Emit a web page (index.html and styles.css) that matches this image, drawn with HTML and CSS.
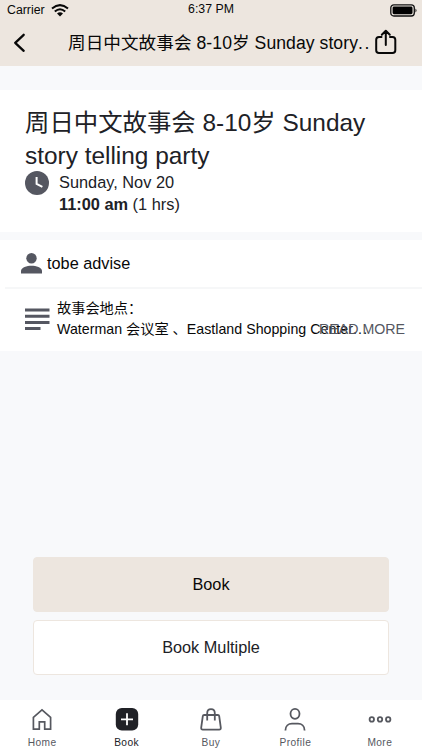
FILE: index.html
```html
<!DOCTYPE html>
<html lang="en">
<head>
<meta charset="utf-8">
<title>Class details</title>
<link rel="stylesheet" href="styles.css">
</head>
<body>
<div class="app">
  <header class="header">
    <div class="status">
      <div class="carrier"><span>Carrier</span>
        <svg width="18" height="13" viewBox="0 0 18 13" fill="none" stroke="#080808" stroke-width="2"><path d="M1 4.5Q9-2.3 17 4.5M3.8 7.5Q9 3 14.2 7.5"/><path d="M6 9.4Q9 7.2 12 9.4L9 12.5Z" fill="#080808" stroke="none"/></svg>
      </div>
      <span class="time">6:37 PM</span>
      <svg class="battery" width="28" height="13" viewBox="0 0 28 13"><rect x=".8" y=".8" width="23.5" height="11.2" rx="3" fill="none" stroke="#111" stroke-width="1.3"/><rect x="2.6" y="2.6" width="19.9" height="7.6" rx="1.4"/><path d="M25.5 4.4Q27.5 6.4 25.5 8.4Z"/></svg>
    </div>
    <div class="navbar">
      <svg class="back" width="14" height="20" viewBox="0 0 14 20" fill="none" stroke="#080808" stroke-width="2.3" stroke-linecap="round" stroke-linejoin="round"><path d="M10.7 1.8L2.2 9.8L10.7 17.8"/></svg>
      <h1 class="nav-title">周日中文故事会 8-10岁 Sunday story<span class="dots">..</span></h1>
      <svg class="share" width="22" height="26" viewBox="0 0 22 26" fill="none" stroke="#080808" stroke-width="2" stroke-linecap="round" stroke-linejoin="round"><path d="M6.5 8H4Q1.2 8 1.2 10.8V21.2Q1.2 24 4 24H17.5Q20.3 24 20.3 21.2V10.8Q20.3 8 17.5 8H15M10.8 16V2M6.8 5.8L10.8 1.8L14.8 5.8"/></svg>
    </div>
  </header>

  <main class="content">
    <section class="summary">
      <h2 class="title">周日中文故事会 8-10岁 Sunday<br>story telling party</h2>
      <div class="when">
        <svg width="24" height="24" viewBox="0 0 24 24"><circle cx="12" cy="12" r="12" fill="#555761"/><path d="M11.6 6V13L17.4 15.9" fill="none" stroke="#fff" stroke-width="2"/></svg>
        <div><p class="date">Sunday, Nov 20</p><p class="hours"><b>11:00 am</b> (1 hrs)</p></div>
      </div>
    </section>
    <section class="details">
      <div class="teacher">
        <svg width="21" height="21" viewBox="0 0 21 21" fill="#555761"><circle cx="10.5" cy="5.3" r="5.2"/><path d="M0 20.5V18C0 14.5 6 12.7 10.5 12.7S21 14.5 21 18V20.5Z"/></svg>
        <span>tobe advise</span>
      </div>
      <div class="notes">
        <svg width="25" height="23" viewBox="0 0 25 23" fill="#555761"><path d="M0 .5H24.5V3.5H0ZM0 6.7H24.5V9.7H0ZM0 12.9H24.5V15.9H0ZM0 19.1H15.5V22H0Z"/></svg>
        <div class="description"><p class="place">故事会地点：</p><p class="address">Waterman 会议室 、Eastland Shopping Center<span class="dots">...</span></p></div>
        <a class="read-more">READ MORE</a>
      </div>
    </section>
    <div class="actions">
      <button class="button primary">Book</button>
      <button class="button secondary">Book Multiple</button>
    </div>
  </main>

  <nav class="tabs">
    <a class="tab"><svg width="24" height="24" viewBox="0 0 24 24" fill="none" stroke="#56585f" stroke-width="1.7"><path d="M3.4 10.3L12 2.9L20.6 10.3V22.2H14.7V14.8H9.3V22.2H3.4Z"/></svg><span>Home</span></a>
    <a class="tab active"><svg width="24" height="24" viewBox="0 0 24 24"><rect x=".8" y="1.1" width="22.4" height="22.4" rx="6" fill="#202126"/><path d="M12 6.3V18.3M6 12.3H18" stroke="#fff" stroke-width="1.8"/></svg><span>Book</span></a>
    <a class="tab"><svg width="24" height="24" viewBox="0 0 24 24" fill="none" stroke="#56585f" stroke-width="1.8"><path d="M5.1 8H18.9Q20 8 20.2 9.2L21.8 20.7Q22 22.6 20.2 22.6H3.8Q2 22.6 2.2 20.7L3.8 9.2Q4 8 5.1 8ZM8.2 13.5V6.2Q8.2 2.2 12 2.2T15.8 6.2V13.5"/></svg><span>Buy</span></a>
    <a class="tab"><svg width="24" height="24" viewBox="0 0 24 24" fill="none" stroke="#56585f" stroke-width="1.8"><ellipse cx="12" cy="6.8" rx="4.5" ry="5"/><path d="M2.4 23.5C2.4 19 5.5 16.7 9 16.7H15C18.5 16.7 21.6 19 21.6 23.5"/></svg><span>Profile</span></a>
    <a class="tab"><svg width="24" height="24" viewBox="0 0 24 24" fill="none" stroke="#56585f" stroke-width="1.8"><circle cx="3.8" cy="12.4" r="2.2"/><circle cx="12" cy="12.4" r="2.2"/><circle cx="20.2" cy="12.4" r="2.2"/></svg><span>More</span></a>
  </nav>
</div>
</body>
</html>
```
FILE: styles.css
```css
* { box-sizing: border-box; }
body { margin: 0; font-family: "Liberation Sans", "Noto Sans CJK SC", sans-serif; color: #080808; }
h1, h2, p { margin: 0; font-weight: 400; white-space: nowrap; }
svg { display: block; flex: none; }
.app { width: 422px; height: 750px; display: flex; flex-direction: column; background: #f8f9fb; overflow: hidden; }
.header { height: 66px; background: #ede6df; flex: none; }
.status { height: 20px; display: grid; grid-template-columns: 1fr auto 1fr; align-items: center; padding: 0 4px 0 7px; font-size: 12.3px; line-height: 20px; }
.carrier { display: flex; align-items: center; gap: 6px; }
.time { padding-right: 3px; line-height: 18px; margin-bottom: 2px; }
.battery { justify-self: end; }
.navbar { height: 46px; display: flex; align-items: center; padding: 0 25px 0 13px; }
.back { margin-bottom: 1px; }
.nav-title { margin-left: 41px; width: 307px; font-size: 17.6px; line-height: 46px; letter-spacing: .06px; }
.nav-title .dots { letter-spacing: 1.5px; }
.share { margin-bottom: 2px; }
.content { flex: 1; display: flex; flex-direction: column; padding-top: 24px; min-height: 0; }
.summary { height: 142px; padding: 16px 25px 0; background: #fff; color: #202126; flex: none; }
.title { font-size: 24.4px; line-height: 33px; }
.when { display: flex; gap: 10px; font-size: 16.35px; line-height: 22px; }
.when svg { margin-top: -1px; }
.when p { position: relative; top: -1px; }
.details { margin-top: 8px; background: #fff; flex: none; }
.teacher { height: 49px; margin-left: 5px; padding-left: 16px; display: flex; align-items: center; gap: 5px; border-bottom: 2px solid #f6f7f8; font-size: 16.3px; }
.notes { position: relative; height: 62px; padding: 9px 0 0 25px; display: flex; gap: 7px; font-size: 14.2px; line-height: 21px; }
.notes svg { margin-top: 10px; }
.address { letter-spacing: .02px; }
.address .dots { letter-spacing: 1.2px; }
.read-more { position: absolute; right: 17px; top: 30px; color: #555761; }
.actions { margin-top: auto; padding: 0 33px 25px; display: flex; flex-direction: column; gap: 8px; }
.button { height: 55px; padding: 0; border: 1px solid #ede6df; border-radius: 4px; font: 16.3px "Liberation Sans", sans-serif; color: #080808; }
.primary { background: #ede6df; }
.secondary { background: #fff; color: #202126; }
.tabs { height: 50px; flex: none; display: grid; grid-template-columns: repeat(5, 1fr); background: #fff; }
.tab { display: flex; flex-direction: column; align-items: center; padding-top: 7px; gap: 5px; color: #56585f; font-size: 10.2px; line-height: 14px; letter-spacing: .4px; }
.active { color: #202126; }
```
